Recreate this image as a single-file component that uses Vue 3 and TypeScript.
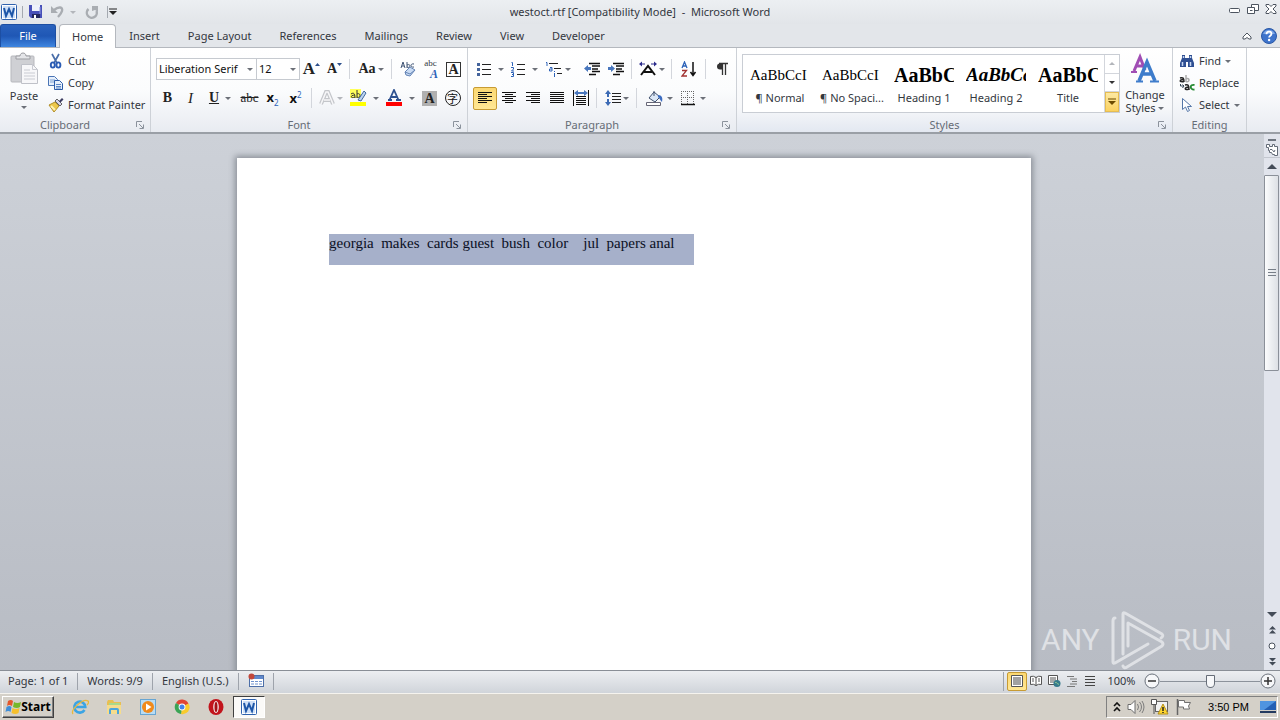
<script setup lang="ts">
import { ref } from 'vue'

const tabs: string[] = ['Insert', 'Page Layout', 'References', 'Mailings', 'Review', 'View', 'Developer']

interface StyleTile {
  sample: string
  label: string
  kind: string
}
const styleTiles: StyleTile[] = [
  { sample: 'AaBbCcI', label: '¶ Normal', kind: 'plain' },
  { sample: 'AaBbCcI', label: '¶ No Spaci...', kind: 'plain' },
  { sample: 'AaBbCc', label: 'Heading 1', kind: 'strong' },
  { sample: 'AaBbCc', label: 'Heading 2', kind: 'slanted' },
  { sample: 'AaBbCc', label: 'Title', kind: 'strong' },
]

const fontName = ref('Liberation Serif')
const fontSize = ref('12')
const zoom = ref(50)
const bodyText = 'georgia  makes  cards guest  bush  color    jul  papers anal'
</script>

<template>
  <div class="window">
    <header class="titlebar">
      <div class="quick">
        <svg class="i16" viewBox="0 0 16 16"><rect x=".5" y=".5" width="15" height="15" rx="1" fill="#fff" stroke="#2f62ae" /><rect x="2" y="2" width="12" height="12" fill="#cfe0f7" /><path d="M3 4l2 8 3-7 3 7 2-8" fill="none" stroke="#1d56a8" stroke-width="2" /></svg>
        <span class="qsep"></span>
        <button class="flat" aria-label="Save"><svg class="i16" viewBox="0 0 16 16"><path d="M1 1h13v13H3l-2-2z" fill="#4750b8" /><path d="M4 1h8v6H4z" fill="#eef2fb" /><path d="M4 10h8v4H4z" fill="#22275f" /><path d="M6 11h2v3H6z" fill="#fff" /><path d="M12 3v7" stroke="#8d96e2" /></svg></button>
        <button class="flat undo" aria-label="Undo"><svg class="i16" viewBox="0 0 16 16"><path d="M4 6c5-4 9-3 8 1-.5 2-2 4-4 6" fill="none" stroke="#a9adb2" stroke-width="2.400" /><path d="M1 2v7h7z" fill="#a9adb2" /></svg><i class="caret pale"></i></button>
        <button class="flat" aria-label="Redo"><svg class="i16" viewBox="0 0 16 16"><path d="M4.500 5a5 5 0 1 0 8 2" fill="none" stroke="#a9adb2" stroke-width="2.400" /><path d="M8 2h6v6l-3-2-3 1z" fill="#a9adb2" /></svg></button>
        <span class="qsep late"></span>
        <button class="flat more" aria-label="Customize toolbar"><svg width="8" height="8" viewBox="0 0 8 8"><path d="M0 1h8" stroke="#222" /><path d="M0 3h8L4 7z" fill="#222" /></svg></button>
      </div>
      <h1>westoct.rtf [Compatibility Mode]&nbsp; -&nbsp; Microsoft Word</h1>
      <div class="winbtns">
        <button class="flat" aria-label="Minimize"><svg width="12" height="12" viewBox="0 0 12 12"><rect x=".5" y="5.500" width="10" height="4" rx="1" fill="#fff" stroke="#4d5560" /></svg></button>
        <button class="flat" aria-label="Restore"><svg width="12" height="12" viewBox="0 0 12 12"><path d="M4.500 1.500h7v6h-7z" fill="#fff" stroke="#4d5560" /><path d="M.5 4.500h7v6h-7z" fill="#fff" stroke="#4d5560" /><path d="M3 7.500h2.500" stroke="#4d5560" /></svg></button>
        <button class="flat" aria-label="Close"><svg width="12" height="12" viewBox="0 0 12 12"><path d="M1 1.500h3l2 2 2-2h3v1.500L8 6l3 3v1.500H8l-2-2-2 2H1V9l3-3-3-3z" fill="#fff" stroke="#4d5560" /></svg></button>
      </div>
    </header>

    <nav class="tabs">
      <button class="file">File</button>
      <button class="tab active">Home</button>
      <button v-for="t in tabs" :key="t" class="tab">{{ t }}</button>
      <div class="tabright">
        <button class="flat" aria-label="Minimize the ribbon"><svg width="10" height="8" viewBox="0 0 10 8"><path d="M1 5l4-4 4 4v2H7L5 5.500 3 7H1z" fill="#fff" stroke="#4d5560" /></svg></button>
        <button class="flat" aria-label="Help"><svg class="i16" viewBox="0 0 16 16"><circle cx="8" cy="8" r="7.500" fill="#3e74cc" stroke="#2a58a5" /><path d="M2 6a6.500 6.500 0 0 1 12 0z" fill="#7fa8e6" /><path d="M5.500 6.200c0-3.600 5-3.200 5-.4 0 2-2.400 1.800-2.400 3.700" fill="none" stroke="#fff" stroke-width="1.800" /><circle cx="8.100" cy="12" r="1.200" fill="#fff" /></svg></button>
      </div>
    </nav>

    <section class="ribbon">
      <div class="group clipboard">
        <div class="body">
          <button class="big paste">
            <svg width="30" height="34" viewBox="0 0 30 34"><rect x="2" y="4" width="23" height="26" rx="1" fill="#cfd0d4" stroke="#b7b8bd" /><path d="M7 7V4h4c0-4 6-4 6 0h4v3z" fill="#e4e5e8" stroke="#9b9ca1" /><path d="M12.500 12.500h11l5 5v14h-16z" fill="#f7f7f9" stroke="#bfc1c8" /><path d="M23.500 12.500v5h5M15 18h6M15 21h11M15 24h11M15 27h11" fill="none" stroke="#c9cbd2" /></svg>
            <span>Paste</span><i class="caret"></i>
          </button>
          <div class="stack">
            <button class="line"><svg class="i16" viewBox="0 0 16 16"><path d="M4 1l5 9M11 1L6 10" stroke="#4a6ea9" stroke-width="1.700" /><ellipse cx="4.800" cy="12" rx="2" ry="2.600" fill="none" stroke="#2a5cb4" stroke-width="1.900" /><ellipse cx="10.400" cy="12" rx="2" ry="2.600" fill="none" stroke="#2a5cb4" stroke-width="1.900" /></svg>Cut</button>
            <button class="line"><svg class="i16" viewBox="0 0 16 16"><path d="M.5 1.500h6l3 3v6h-9z" fill="#e6effb" stroke="#4a74b5" /><path d="M2 5h5M2 7h4" stroke="#7fa0d0" /><path d="M6.500 5.500h5l3 3v6h-8z" fill="#e6effb" stroke="#2c5ba8" /><path d="M8 9.500h5M8 11.500h5M8 13h5" stroke="#5c86c4" /></svg>Copy</button>
            <button class="line"><svg class="i16" viewBox="0 0 16 16"><path d="M1 8l6-3 4 4-5 6z" fill="#ecc74c" stroke="#b28f2b" /><path d="M3 9l4 4" stroke="#fff2b4" stroke-width="2" /><path d="M7 4l5 5 2-2-5-5z" fill="#d8d4ea" stroke="#666" /><path d="M11 4l3-3 1.500 1.500-3 3z" fill="#3c3c60" /></svg>Format Painter</button>
          </div>
        </div>
        <footer><span>Clipboard</span><button class="flat launch" aria-label="Clipboard options"><svg width="8" height="8" viewBox="0 0 8 8"><path d="M.5 6V.5H6M3 3l4 4M7.500 3.500v4h-4" fill="none" stroke="#8b929c" /></svg></button></footer>
      </div>

      <div class="group font">
        <div class="rows">
          <div class="row">
            <label class="combo name"><select v-model="fontName" aria-label="Font"><option>Liberation Serif</option></select><i class="caret"></i></label>
            <label class="combo size"><select v-model="fontSize" aria-label="Font size"><option>12</option></select><i class="caret"></i></label>
            <button class="ib serif grow" aria-label="Grow font"><b>A</b><svg width="5" height="14" viewBox="0 0 5 14"><path d="M0 4h5L2.500 1z" fill="#2c4f8c" /></svg></button>
            <button class="ib serif" aria-label="Shrink font"><b>A</b><svg width="5" height="14" viewBox="0 0 5 14"><path d="M0 1h5L2.500 4z" fill="#2c4f8c" /></svg></button>
            <span class="sep"></span>
            <button class="ib w34 serif case" aria-label="Change case"><b>Aa</b><i class="caret"></i></button>
            <span class="sep"></span>
            <button class="ib" aria-label="Clear formatting"><svg class="i16" viewBox="0 0 16 16"><path d="M1 7l2-6 2 6M2 5h2M7 1v6M7 4c4-2 4 4 0 2M14 3c-4-1-4 4 0 3" fill="none" stroke="#3f5475" /><path d="M5 11l5-5 5 3-5 6-4-1z" fill="#c9dbf3" stroke="#6484b5" /><path d="M5 11l5 2 5-4" fill="none" stroke="#6484b5" /></svg></button>
            <button class="ib phon" aria-label="Phonetic guide"><span>abc</span><b>A</b></button>
            <button class="ib" aria-label="Character border"><span class="boxed">A</span></button>
          </div>
          <div class="row">
            <button class="ib serif bold"><b>B</b></button>
            <button class="ib serif slant"><em>I</em></button>
            <button class="ib w36 serif bold"><u>U</u><i class="caret"></i></button>
            <button class="ib serif strike"><s>abc</s></button>
            <button class="ib scr"><span><b>x</b><sub>2</sub></span></button>
            <button class="ib scr"><span><b>x</b><sup>2</sup></span></button>
            <span class="sep wide"></span>
            <button class="ib w30" aria-label="Text effects"><svg class="i16" viewBox="0 0 16 16"><path d="M2 14L7 2h2l5 12M5 10h6" fill="none" stroke="#c4c6ca" stroke-width="4" /><path d="M2 14L7 2h2l5 12M5 10h6" fill="none" stroke="#f6f6f8" stroke-width="1.600" /></svg><i class="caret pale tight"></i></button>
            <button class="ib w36" aria-label="Highlight color"><svg width="17" height="18" viewBox="0 0 17 18"><path d="M0 0h11v9H0z" fill="#ffff5a" /><path d="M1 5c3-2 4 0 4 4M5 6c-5 0-5 4 0 2M7 1v8M7 5c4-2 4 5 0 3" fill="none" stroke="#333" /><path d="M8 11l6-9 2 2-5 8z" fill="#bcd3ef" stroke="#40699d" /><path d="M0 13h16v4H0z" fill="#ff0" /></svg><i class="caret"></i></button>
            <button class="ib w36" aria-label="Font color"><svg width="17" height="18" viewBox="0 0 17 18"><path d="M3.500 11L8 1l4.500 10M5 8h6M2 11h4M10 11h5" fill="none" stroke="#2f5290" stroke-width="1.800" /><path d="M0 13h16v4H0z" fill="#f00" /></svg><i class="caret"></i></button>
            <button class="ib" aria-label="Character shading"><span class="shaded">A</span></button>
            <button class="ib" aria-label="Enclose characters"><span class="ring">字</span></button>
          </div>
        </div>
        <footer><span>Font</span><button class="flat launch" aria-label="Font options"><svg width="8" height="8" viewBox="0 0 8 8"><path d="M.5 6V.5H6M3 3l4 4M7.500 3.500v4h-4" fill="none" stroke="#8b929c" /></svg></button></footer>
      </div>

      <div class="group para">
        <div class="rows">
          <div class="row">
            <button class="ib w34" aria-label="Bullets"><svg class="i16" viewBox="0 0 16 16"><path d="M6 3.500h9M6 8.500h9M6 13.500h9" stroke="#222" /><path d="M1 2h3v3H1zM1 7h3v3H1zM1 12h3v3H1z" fill="#43639c" /></svg><i class="caret"></i></button>
            <button class="ib w34" aria-label="Numbering"><svg class="i16" viewBox="0 0 16 16"><path d="M7 3.500h8M7 8.500h8M7 13.500h8" stroke="#222" /><path d="M1.500 1.500h1V5M1 6.500h2.500v1.500L1.500 10h2.500M1 11.500h2.500v4H1M2 13.500h1.500" fill="none" stroke="#2c62b8" /></svg><i class="caret"></i></button>
            <button class="ib w34" aria-label="Multilevel list"><svg width="18" height="16" viewBox="0 0 18 16"><path d="M4 2.500h9M9 7.500h7M12 12.500h5" stroke="#222" /><path d="M1 1.500h1V5M5 6.500h2v3.500H4.500V8H7M9.500 12v4M9.500 10v1" fill="none" stroke="#2c62b8" /></svg><i class="caret tight"></i></button>
            <span class="sep blank"></span>
            <button class="ib" aria-label="Decrease indent"><svg class="i16" viewBox="0 0 16 16"><path d="M5 2.500h11M8 5h8M8 8h6M8 10.500h8M5 13.500h7" stroke="#111" stroke-width="1.500" /><path d="M0 7.500l4-3.500v2h3v3H4v2z" fill="#4876bd" /></svg></button>
            <button class="ib" aria-label="Increase indent"><svg class="i16" viewBox="0 0 16 16"><path d="M5 2.500h11M8 5h8M8 8h6M8 10.500h8M5 13.500h7" stroke="#111" stroke-width="1.500" /><path d="M7 7.500L3 4v2H0v3h3v2z" fill="#4876bd" /></svg></button>
            <span class="sep"></span>
            <button class="ib w32" aria-label="Asian layout"><svg width="18" height="16" viewBox="0 0 18 16"><path d="M2 14l7-9 7 9M5 11h8" fill="none" stroke="#111" stroke-width="2" /><path d="M0 3l3-2.500v5zM18 3l-3-2.500v5z" fill="#2c2c8c" /><path d="M2 3h4M12 3h4" stroke="#2c2c8c" /></svg><i class="caret tight"></i></button>
            <span class="sep"></span>
            <button class="ib w26" aria-label="Sort"><svg class="i16" viewBox="0 0 16 16"><path d="M1 7l2.500-6L6 7M2 5h3" fill="none" stroke="#2c62b8" stroke-width="1.300" /><path d="M1 9.500h4.500L1 15h5" fill="none" stroke="#a23333" stroke-width="1.300" /><path d="M12 1v13M9.500 11l2.500 3.500L14.500 11" fill="none" stroke="#111" stroke-width="1.500" /></svg></button>
            <span class="sep"></span>
            <button class="ib" aria-label="Show paragraph marks"><svg class="i16" viewBox="0 0 16 16"><path d="M8 2.500H6a2.800 2.800 0 0 0 0 6h2z" fill="#333" /><path d="M5 2.500h9M8.500 2v12M11.500 2v12" fill="none" stroke="#333" stroke-width="1.300" /></svg></button>
          </div>
          <div class="row">
            <button class="ib on" aria-label="Align left"><svg class="i16" viewBox="0 0 16 16"><path d="M1 2.500h14M1 4.500h9M1 6.500h14M1 8.500h9M1 10.500h14M1 12.500h9" stroke="#111" /></svg></button>
            <button class="ib" aria-label="Center"><svg class="i16" viewBox="0 0 16 16"><path d="M1 2.500h14M4 4.500h8M1 6.500h14M4 8.500h8M1 10.500h14M4 12.500h8" stroke="#111" /></svg></button>
            <button class="ib" aria-label="Align right"><svg class="i16" viewBox="0 0 16 16"><path d="M1 2.500h14M6 4.500h9M1 6.500h14M6 8.500h9M1 10.500h14M6 12.500h9" stroke="#111" /></svg></button>
            <button class="ib" aria-label="Justify"><svg class="i16" viewBox="0 0 16 16"><path d="M1 2.500h14M1 4.500h14M1 6.500h14M1 8.500h14M1 10.500h14M1 12.500h14" stroke="#111" /></svg></button>
            <button class="ib" aria-label="Distribute"><svg class="i16" viewBox="0 0 16 16"><path d="M.5 0v16M15.500 0v16M3 6.500h10M3 8.500h10M3 10.500h10M3 12.500h10M3 14.500h10" stroke="#111" /><path d="M1 3l4-3v2h6V0l4 3-4 3V4H5v2z" fill="#4876bd" /></svg></button>
            <span class="sep"></span>
            <button class="ib w32" aria-label="Line spacing"><svg class="i16" viewBox="0 0 16 16"><path d="M7 3.500h9M7 6.500h9M7 9.500h9M7 12.500h9" stroke="#222" /><path d="M3 0l3 4H4v3H2V4H0zM3 16l3-4H4V9H2v3H0z" fill="#3b6ab5" /></svg><i class="caret tight"></i></button>
            <span class="sep"></span>
            <button class="ib w36" aria-label="Shading"><svg width="17" height="16" viewBox="0 0 17 16"><path d="M3 8l5-6 6 5-5 5z" fill="#dce8f7" stroke="#40506c" /><path d="M8 6V1" stroke="#40506c" /><path d="M12 5c4 0 5 3 4 7-2-2-2-3-4-5z" fill="#3c6cc0" /><path d="M.5 12.500h14v3H.5z" fill="#fff" stroke="#667" /></svg><i class="caret near"></i></button>
            <button class="ib w32" aria-label="Borders"><svg class="i16" viewBox="0 0 16 16"><path d="M1 1.500h13M1 7.500h13M1.500 1v13M7.500 1v13M13.500 1v13" stroke="#666" stroke-dasharray="1 1" /><path d="M1 14.500h14" stroke="#111" stroke-width="1.500" /></svg><i class="caret near"></i></button>
          </div>
        </div>
        <footer><span>Paragraph</span><button class="flat launch" aria-label="Paragraph options"><svg width="8" height="8" viewBox="0 0 8 8"><path d="M.5 6V.5H6M3 3l4 4M7.500 3.500v4h-4" fill="none" stroke="#8b929c" /></svg></button></footer>
      </div>

      <div class="group styles">
        <div class="body">
          <div class="gallery">
            <button v-for="s in styleTiles" :key="s.label" class="tile"><span :class="['sample', s.kind]">{{ s.sample }}</span><span class="cap">{{ s.label }}</span></button>
            <div class="gscroll">
              <button aria-label="Scroll up"><i class="caret up pale"></i></button>
              <button aria-label="Scroll down"><i class="caret dark"></i></button>
              <button class="hot" aria-label="More styles"><svg width="8" height="8" viewBox="0 0 8 8"><path d="M0 1h8" stroke="#6b4a00" /><path d="M0 3h8L4 7z" fill="#6b4a00" /></svg></button>
            </div>
          </div>
          <button class="big change">
            <svg width="32" height="32" viewBox="0 0 32 32"><path d="M5 18L11 4l5 13M7 13h7" fill="none" stroke="#a04db4" stroke-width="3" /><path d="M2 19h6" stroke="#a04db4" stroke-width="2" /><path d="M10 28L18 9l8 19M13 21h10" fill="none" stroke="#3e7ccb" stroke-width="3.500" /><path d="M7 28.500h7M21 28.500h9" stroke="#3e7ccb" stroke-width="2" /></svg>
            <span>Change</span><span>Styles <i class="caret"></i></span>
          </button>
        </div>
        <footer><span>Styles</span><button class="flat launch" aria-label="Styles options"><svg width="8" height="8" viewBox="0 0 8 8"><path d="M.5 6V.5H6M3 3l4 4M7.500 3.500v4h-4" fill="none" stroke="#8b929c" /></svg></button></footer>
      </div>

      <div class="group editing">
        <div class="body">
          <div class="stack">
            <button class="line"><svg class="i16" viewBox="0 0 16 16"><path d="M3 2h3v3h4V2h3v3l2 5v4H9V9H7v5H1v-4l2-5z" fill="#2f4f92" /><path d="M3.500 9v4M11.500 9v4M4.500 3v2M11.500 3v2" stroke="#c5d6f1" stroke-width="1.500" /></svg>Find <i class="caret"></i></button>
            <button class="line"><svg class="i16" viewBox="0 0 16 16"><path d="M1 3c3-1 4 0 4 4M5 4.500c-5 0-5 3 0 2" fill="none" stroke="#222" stroke-width="1.500" /><path d="M7 0v7M7 4c4-2 4 4 0 2.500" fill="none" stroke="#aaa" stroke-width="1.500" /><path d="M1.500 9v2h3M3.500 9.500L5 11l-1.500 2" fill="none" stroke="#345" /><path d="M6 10c3-1 4 0 4 5M10 12c-5 0-5 4 0 2" fill="none" stroke="#222" stroke-width="1.500" /><path d="M15.500 10c-5-1-5 5 0 4.500" fill="none" stroke="#268a32" stroke-width="1.800" /></svg>Replace</button>
            <button class="line"><svg class="i16" viewBox="0 0 16 16"><path d="M3.500 1.500v11l3-2.500 2 4.500 2-1-2-4h4z" fill="#fff" stroke="#5577a8" /></svg>Select <i class="caret"></i></button>
          </div>
        </div>
        <footer class="solo"><span>Editing</span></footer>
      </div>
    </section>

    <main class="work">
      <div class="canvas">
        <article class="page"><p>{{ bodyText }}</p></article>
        <div class="mark">
          <span>ANY</span>
          <svg width="57" height="60" viewBox="0 0 57 60"><g fill="none" stroke="#dfe1e5" stroke-width="3" stroke-linecap="round" stroke-linejoin="round"><path d="M7 8q-2 0-2 3v41q0 2 2 1l33-19" /><path d="M15 44V4q0-2 2-1l37 21q2 2-1 4" /><path d="M20 36V13l34 19q2 2 0 4L19 57q-3 2-4-1" /></g></svg>
          <span>RUN</span>
        </div>
      </div>
      <aside class="scroll">
        <span class="split"></span>
        <button class="rulerbtn" aria-label="View ruler"><svg width="12" height="12" viewBox="0 0 12 12"><path d="M.5 3.500v-3h3v2h3v-2h2v2h3v9h-3v-1h-2l-1-2h-2v-2h-1v-3z" fill="#fff" stroke="#636b77" /><path d="M4 5.500h2l2 2.500 1-2" fill="none" stroke="#636b77" /></svg></button>
        <button aria-label="Scroll up"><i class="caret up wide"></i></button>
        <div class="track"><div class="thumb"><svg width="8" height="8" viewBox="0 0 8 8"><path d="M0 .5h8M0 3.500h8M0 6.500h8" stroke="#777e88" /></svg></div></div>
        <button aria-label="Scroll down"><i class="caret wide"></i></button>
        <button class="nav" aria-label="Previous page"><svg width="7" height="8" viewBox="0 0 7 8"><path d="M0 3.500h7L3.500 0zM0 7.500h7L3.500 4z" fill="#444c58" /></svg></button>
        <button class="nav" aria-label="Browse object"><svg width="8" height="8" viewBox="0 0 8 8"><circle cx="4" cy="4" r="3" fill="#fff" stroke="#4b535f" /></svg></button>
        <button class="nav" aria-label="Next page"><svg width="7" height="8" viewBox="0 0 7 8"><path d="M0 0h7L3.500 3.500zM0 4h7L3.500 7.500z" fill="#444c58" /></svg></button>
      </aside>
    </main>

    <div class="status">
      <button class="first">Page: 1 of 1</button>
      <button>Words: 9/9</button>
      <button>English (U.S.)</button>
      <button aria-label="Macro recording"><svg class="i16" viewBox="0 0 16 16"><rect x="1.500" y="2.500" width="14" height="11" fill="#fff" stroke="#4d6fa8" /><path d="M2 3h13v3H2z" fill="#5f88cc" /><path d="M3 8.500h11M3 11h11" stroke="#6f93cf" stroke-dasharray="3 1" /><circle cx="3.500" cy="3.500" r="3" fill="#c2473a" /></svg></button>
      <div class="views">
        <button class="on" aria-label="Print layout"><svg class="i14" viewBox="0 0 14 14"><path d="M1.500 1.500h11v11h-11z" fill="#fff" stroke="#555" /><path d="M3 4h8M3 6h8M3 8h8M3 10h8" stroke="#444" /></svg></button>
        <button aria-label="Full screen reading"><svg class="i14" viewBox="0 0 14 14"><path d="M1.500 2.500q3-1 5.500 1 2.500-2 5.500-1v8q-3-1-5.500 1-2.500-2-5.500-1zM7 3v9" fill="#fff" stroke="#555" /><path d="M3 5h2M3 7h2M9 5h2M9 7h2" stroke="#555" /></svg></button>
        <button aria-label="Web layout"><svg class="i14" viewBox="0 0 14 14"><path d="M1.500 1.500h9v9h-9z" fill="#fff" stroke="#555" /><path d="M3 4h6M3 6h6M3 8h4" stroke="#555" /><circle cx="10" cy="9.500" r="3.500" fill="#357a8c" /><path d="M8 9c2-2 2 2 4 1" fill="none" stroke="#9fd48c" /></svg></button>
        <button aria-label="Outline"><svg class="i14" viewBox="0 0 14 14"><path d="M2 2.500h7M5 5h7M7 7.500h5M5 10h7M2 12.500h8" stroke="#777" /></svg></button>
        <button aria-label="Draft"><svg class="i14" viewBox="0 0 14 14"><path d="M2 2.500h10M2 5.500h10M2 8.500h10M2 11.500h10" stroke="#444" /></svg></button>
      </div>
      <button class="pct">100%</button>
      <button class="round" aria-label="Zoom out"><svg class="i16" viewBox="0 0 16 16"><circle cx="8" cy="8" r="7" fill="#f6f7f9" stroke="#6b727c" /><path d="M4 8h8" stroke="#333" stroke-width="1.500" /></svg></button>
      <input v-model="zoom" type="range" min="0" max="100" aria-label="Zoom" />
      <button class="round" aria-label="Zoom in"><svg class="i16" viewBox="0 0 16 16"><circle cx="8" cy="8" r="7" fill="#f6f7f9" stroke="#6b727c" /><path d="M4 8h8M8 4v8" stroke="#333" stroke-width="1.500" /></svg></button>
    </div>

    <div class="taskbar">
      <button class="start"><svg class="i16" viewBox="0 0 16 16"><path d="M3 2q3-2 5 0L7 7q-3-2-5 0z" fill="#e4572b" /><path d="M9 3q3 2 7 0l-1 5q-3 2-7 0z" fill="#76b82a" /><path d="M1.500 8q3-2 5 0l-1 5q-2-2-5 0z" fill="#3f8ed8" /><path d="M7.500 9q3 2 7 0l-1 5q-3 2-7 0z" fill="#f6c02c" /></svg>Start</button>
      <div class="apps">
        <button aria-label="Internet Explorer"><svg class="i18" viewBox="0 0 18 18"><path d="M13.500 12a5.500 5.500 0 1 1 .8-3H5" fill="none" stroke="#3ba4e4" stroke-width="2.600" /><path d="M2 16C-1 12 12 0 17 3c1 1 0 3-1 4" fill="none" stroke="#e9b83c" stroke-width="1.300" /></svg></button>
        <button aria-label="Explorer"><svg class="i18" viewBox="0 0 18 18"><path d="M2 4l1-2h5l1 2h7v11H2z" fill="#e8bf52" /><path d="M4 5h11v5H4z" fill="#a9d98a" /><path d="M2 7h14v9H2z" fill="#f6dc8c" /><path d="M4 16v-4q0-2 2-2h6q2 0 2 2v4h-2v-4H6v4z" fill="#4aa5dc" /></svg></button>
        <button aria-label="Media Player"><svg class="i18" viewBox="0 0 18 18"><rect x="1.500" y="1.500" width="15" height="15" fill="#b8dcf4" stroke="#67a5d2" /><circle cx="9" cy="9" r="6" fill="#f08a1c" /><path d="M7 5.500v7L12.500 9z" fill="#fff" /></svg></button>
        <button aria-label="Chrome"><svg class="i18" viewBox="0 0 18 18"><path d="M9 9L3 5a7 7 0 0 1 12.500 1z" fill="#e04434" /><path d="M9 9l6.500-3.500A7 7 0 0 1 8 16z" fill="#f8cb2e" /><path d="M9 9l-1 7A7 7 0 0 1 3 5z" fill="#3aa455" /><circle cx="9" cy="9" r="3.400" fill="#fff" /><circle cx="9" cy="9" r="2.500" fill="#4382ea" /></svg></button>
        <button aria-label="Opera"><svg class="i18" viewBox="0 0 18 18"><ellipse cx="9" cy="9" rx="7.500" ry="8" fill="#c2141c" /><ellipse cx="9" cy="9" rx="2.800" ry="6" fill="#f4e8e8" /><ellipse cx="9" cy="9" rx="1.500" ry="5" fill="#a51016" /></svg></button>
        <button class="pressed" aria-label="Microsoft Word"><svg class="i16" viewBox="0 0 16 16"><rect x=".5" y=".5" width="15" height="15" rx="1" fill="#fff" stroke="#2f62ae" /><rect x="2" y="2" width="12" height="12" fill="#cfe0f7" /><path d="M3 4l2 8 3-7 3 7 2-8" fill="none" stroke="#1d56a8" stroke-width="2" /></svg></button>
      </div>
      <div class="tray">
        <button class="flat" aria-label="Show hidden icons"><svg width="8" height="10" viewBox="0 0 8 10"><path d="M1 4l3-3 3 3M1 9l3-3 3 3" fill="none" stroke="#111" stroke-width="1.600" /></svg></button>
        <svg class="i18" viewBox="0 0 18 18"><path d="M1 6.500h3l4-4v13l-4-4H1z" fill="#fff" stroke="#6c6c6c" /><path d="M10.500 6q2 3 0 6M12.500 4q4 5 0 10M15 3q4 6 0 12" fill="none" stroke="#7c7c7c" /></svg>
        <svg class="i18" viewBox="0 0 18 18"><rect x="4.500" y="3.500" width="12" height="10" fill="#f2f2f2" stroke="#666" /><path d="M.5 1.500h5v5h-5zM3 7v9" fill="#fff" stroke="#555" /><path d="M12 6l5 10H7z" fill="#ffd62e" stroke="#b5901a" /><path d="M12 9v4M12 14v1" stroke="#222" stroke-width="1.500" /></svg>
        <svg class="i18" viewBox="0 0 18 18"><path d="M2.500 1v16" stroke="#666" stroke-width="1.500" /><path d="M3.500 2.500h6v2h6l-2 3.500 1 3H8.500V9h-5z" fill="#fff" stroke="#707070" /></svg>
        <time>3:50 PM</time>
        <svg class="i16" viewBox="0 0 16 16"><path d="M0 2h16v9H0z" fill="#2460b4" /><path d="M0 2h16L4 11H0z" fill="#4f94e0" /><path d="M0 12h16v2H0z" fill="#243b60" /></svg>
      </div>
    </div>
  </div>
</template>

<style>
html,
body {
  overflow: hidden;
}
</style>

<style scoped>
.window {
  display: flex;
  flex-direction: column;
  height: 100vh;
  font: 11px/14px 'Noto Sans', 'Open Sans', sans-serif;
  color: #33373e;
  background: #e3e6ea;
}
.window * {
  box-sizing: border-box;
}
button {
  font: inherit;
  color: inherit;
  border: 0;
  padding: 0;
  margin: 0;
  background: none;
  display: flex;
  align-items: center;
  justify-content: center;
}
svg {
  display: block;
  flex: none;
}
.i16 {
  width: 16px;
  height: 16px;
}
.i14 {
  width: 14px;
  height: 14px;
}
.i18 {
  width: 18px;
  height: 18px;
}
.caret {
  display: inline-block;
  flex: none;
  width: 6px;
  border: 3px solid transparent;
  border-top-color: #6c7078;
  border-bottom-width: 0;
}
.caret.up {
  border-top-width: 0;
  border-bottom: 3px solid #6c7078;
}
.caret.pale {
  border-top-color: #b3b6bb;
}
.caret.up.pale {
  border-bottom-color: #b3b6bb;
}
.caret.dark {
  border-top-color: #333;
}
.caret.wide {
  width: 10px;
  border-width: 5px 5px 0;
  border-top-color: #444c58;
}
.caret.up.wide {
  border-width: 0 5px 5px;
  border-bottom-color: #444c58;
}

.titlebar {
  display: grid;
  grid-template-columns: 1fr auto 1fr;
  align-items: center;
  height: 24px;
  background: linear-gradient(#eceff2, #e2e5e9);
}
.titlebar h1 {
  margin: 0;
  font: inherit;
}
.quick {
  display: flex;
  align-items: center;
  gap: 5px;
  padding-left: 1px;
}
.qsep {
  width: 1px;
  height: 12px;
  background: #a4a9b0;
}
.qsep.late {
  margin-left: 2px;
}
.undo {
  width: 28px;
  gap: 4px;
  margin-right: 2px;
}
.more {
  margin-left: -4px;
}
.winbtns {
  display: flex;
  justify-content: flex-end;
  gap: 6px;
  padding: 0 3px 6px 0;
}

.tabs {
  display: flex;
  height: 24px;
  border-bottom: 1px solid #b4b8be;
  background: #e3e6ea;
}
.file {
  width: 56px;
  margin-right: 3px;
  color: #fff;
  border: 1px solid #1d4fa3;
  border-bottom: 0;
  border-radius: 3px 3px 0 0;
  background: linear-gradient(#2a62bd, #1f57b5 50%, #3f86e0);
}
.tab {
  padding: 0 14px;
}
.tab.active {
  padding: 0 12px;
  background: #fff;
  border: 1px solid #b4b8be;
  border-bottom: 0;
  border-radius: 4px 4px 0 0;
  margin: 0 -1px -1px 0;
}
.tabright {
  display: flex;
  align-items: center;
  gap: 9px;
  margin-left: auto;
  padding-right: 3px;
}

.ribbon {
  display: flex;
  height: 86px;
  background: linear-gradient(#fff, #fbfcfd 50%, #e8ebf1);
  border-bottom: 2px solid #9a9fa6;
}
.group {
  display: flex;
  flex-direction: column;
  flex: none;
  border-right: 1px solid #cdd1d7;
}
.clipboard {
  width: 151px;
}
.font {
  width: 317px;
}
.para {
  width: 269px;
}
.styles {
  width: 436px;
  background: linear-gradient(#fff, #f7f8fa 70%, #e3e8f1);
}
.editing {
  width: 74px;
}
.group footer {
  display: grid;
  grid-template-columns: 1fr 20px;
  height: 17px;
  padding-top: 2px;
  align-items: center;
  text-align: center;
  color: #666c76;
}
.group footer.solo {
  grid-template-columns: 1fr;
}
.body {
  display: flex;
  height: 67px;
}
.stack {
  display: flex;
  flex-direction: column;
  padding-top: 2px;
}
.line {
  flex: none;
  height: 22px;
  gap: 4px;
  justify-content: flex-start;
  white-space: nowrap;
}
.big {
  flex-direction: column;
  justify-content: flex-start;
}
.paste {
  width: 48px;
  padding-top: 4px;
  gap: 3px;
}
.editing .stack {
  padding-left: 6px;
}

.rows {
  height: 67px;
  padding: 9px 0 0 5px;
}
.row {
  display: flex;
  align-items: center;
  height: 24px;
  margin-bottom: 5px;
}
.para .rows {
  padding-left: 5px;
}
.combo {
  display: grid;
  grid-template-columns: 1fr 12px;
  align-items: center;
  justify-items: center;
  height: 22px;
  background: #fff;
  border: 1px solid #c6cad0;
}
.combo.name {
  width: 101px;
}
.combo.size {
  width: 43px;
  border-left: 0;
}
.combo select {
  appearance: none;
  font: inherit;
  color: #111;
  border: 0;
  padding: 0 0 0 2px;
  width: 100%;
  background: none;
}
.ib {
  width: 23px;
  height: 23px;
  flex: none;
}
.ib .caret {
  margin-left: 6px;
}
.ib .caret.near {
  margin-left: 4px;
}
.ib .caret.tight {
  margin-left: 2px;
}
.w26 {
  width: 26px;
}
.w30 {
  width: 30px;
}
.w32 {
  width: 32px;
}
.w34 {
  width: 34px;
}
.w36 {
  width: 36px;
}
.para .ib:not(.w26, .w30, .w32, .w34, .w36) {
  width: 24px;
}
.sep {
  width: 1px;
  height: 20px;
  margin: 0 4px 0 3px;
  background: #d3d6dc;
  flex: none;
}
.sep.wide {
  margin: 0 4px;
}
.sep.blank {
  background: none;
  margin: 0 2px;
}
.serif {
  font: 14px/16px 'Liberation Serif', serif;
  color: #222;
}
.grow {
  font-size: 17px;
}
.serif.bold {
  font-size: 14px;
  font-weight: 700;
}
.slant {
  font-size: 15px;
}
.strike {
  font-size: 13px;
}
.case .caret {
  margin-left: 2px;
}
.scr {
  font: 13px/16px 'Noto Sans', sans-serif;
  color: #111;
}
.scr sub,
.scr sup {
  font-size: 8px;
  line-height: 8px;
  color: #2c62b8;
}
.phon {
  flex-direction: column;
  align-items: center;
  font: 9px/10px 'Liberation Serif', serif;
}
.phon b {
  font: italic 700 12px/12px 'Liberation Serif', serif;
  color: #2c62b8;
  padding-left: 7px;
}
.boxed,
.shaded {
  width: 15px;
  height: 15px;
  font: 700 14px/14px 'Liberation Serif', serif;
  border: 1px solid #333;
  color: #222;
}
.shaded {
  border-color: #b0b0b0;
  background: #b0b0b0;
}
.ring {
  width: 16px;
  height: 16px;
  font: 11px/14px 'Noto Sans CJK SC', sans-serif;
  border: 1px solid #222;
  border-radius: 50%;
  color: #111;
}
.on {
  border: 1px solid #c79b34;
  border-radius: 2px;
  background: linear-gradient(#fbd872, #ffe795);
}

.gallery {
  display: flex;
  width: 378px;
  height: 59px;
  margin: 6px 0 0 5px;
  padding-left: 1px;
  background: #fff;
  border: 1px solid #c9cdd4;
}
.tile {
  width: 72px;
  flex-direction: column;
  justify-content: flex-start;
  gap: 2px;
  padding: 6px 6px 0;
}
.sample {
  width: 60px;
  height: 28px;
  overflow: hidden;
  white-space: nowrap;
  text-align: left;
  font: 15px/28px 'Liberation Serif', serif;
  color: #000;
}
.strong {
  font-size: 20px;
  font-weight: 700;
}
.slanted {
  font-size: 19px;
  font-weight: 700;
  font-style: italic;
}
.cap {
  white-space: nowrap;
}
.gscroll {
  display: flex;
  flex-direction: column;
  flex: 1;
  border-left: 1px solid #d3d6dc;
}
.gscroll button {
  flex: 1;
  border-bottom: 1px solid #d3d6dc;
}
.gscroll .hot {
  border: 1px solid #e6bd52;
  background: linear-gradient(#fde9a2, #fbd260);
}
.change {
  width: 50px;
  padding-top: 5px;
  line-height: 13px;
}
.change svg {
  margin-bottom: 3px;
}
.change .caret {
  vertical-align: 2px;
}

.work {
  flex: 1;
  display: flex;
  min-height: 0;
}
.canvas {
  position: relative;
  flex: 1;
  overflow: hidden;
  padding: 24px 0 0 4px;
  background: linear-gradient(#cdd1d8, #b8bcc4);
}
.page {
  width: 794px;
  height: 1123px;
  margin: 0 auto;
  padding: 76px 92px;
  background: #fff;
  box-shadow: 0 0 6px 2px #8a8f97;
}
.page p {
  width: 365px;
  height: 31px;
  margin: 0;
  font: 15px/19px 'Liberation Serif', serif;
  white-space: pre;
  color: #0a0f24;
  background: #a6b0ca;
}
.mark {
  position: absolute;
  right: 32px;
  bottom: 0;
  display: flex;
  align-items: center;
  gap: 8px;
  color: #dfe1e5;
  font: 30px/60px 'Roboto', sans-serif;
}
.scroll {
  width: 16px;
  display: flex;
  flex-direction: column;
  align-items: center;
  background: #e1e4ec;
}
.scroll button {
  width: 16px;
  height: 16px;
  flex: none;
}
.scroll .rulerbtn {
  border-bottom: 1px solid #c3c7cf;
}
.split {
  width: 8px;
  height: 2px;
  margin: 5px 0 1px;
  background: #6f7680;
}
.track {
  flex: 1;
  width: 100%;
  padding: 1px 1px 0 0;
}
.thumb {
  display: flex;
  align-items: center;
  justify-content: center;
  height: 196px;
  border: 1px solid #8b9099;
  border-radius: 1px;
  background: linear-gradient(90deg, #fbfcfd, #dde0e5);
}

.status {
  display: flex;
  align-items: center;
  height: 23px;
  padding: 0 4px 2px 0;
  border-top: 1px solid #898e96;
  background: linear-gradient(#eceef1, #d0d4da);
}
.status > button:not(.round, .pct) {
  height: 17px;
  padding: 0 9px;
  border-right: 1px solid #9ea3ab;
}
.status > button.first:not(.round) {
  padding-left: 8px;
}
.views {
  display: flex;
  margin-left: auto;
  padding-left: 3px;
  border-left: 1px solid #9ea3ab;
}
.views button {
  width: 18px;
  height: 19px;
}
.views .on {
  width: 20px;
}
.pct {
  width: 45px;
}
.status input {
  appearance: none;
  width: 100px;
  height: 16px;
  margin: 0;
  background: linear-gradient(#8c929b, #8c929b) center / 100% 1px no-repeat;
}
.status input::-webkit-slider-thumb {
  appearance: none;
  width: 9px;
  height: 13px;
  border: 1px solid #666d78;
  border-radius: 1px 1px 5px 5px;
  background: #f7f8fa;
}

.taskbar {
  display: flex;
  align-items: center;
  height: 27px;
  padding: 0 2px 1px;
  background: #d4d0c8;
  border-top: 1px solid #f5f3ee;
}
.start {
  width: 52px;
  height: 22px;
  color: #000;
  font: 700 12px/16px 'Noto Sans', sans-serif;
  border: 1px solid;
  border-color: #fff #404040 #404040 #fff;
  box-shadow: inset -1px -1px #808080;
}
.apps {
  display: flex;
  padding-left: 9px;
}
.apps button {
  width: 34px;
  height: 22px;
}
.apps .pressed {
  width: 32px;
  border: 1px solid;
  border-color: #404040 #fff #fff #404040;
  background: #fbfaf8;
}
.tray {
  display: flex;
  align-items: center;
  gap: 6px;
  height: 22px;
  margin-left: auto;
  padding: 0 1px 0 6px;
  border: 1px solid;
  border-color: #808080 #fff #fff #808080;
  color: #000;
  font: 11px/14px 'Liberation Sans', sans-serif;
}
.tray time {
  padding: 0 5px 0 9px;
}
</style>
